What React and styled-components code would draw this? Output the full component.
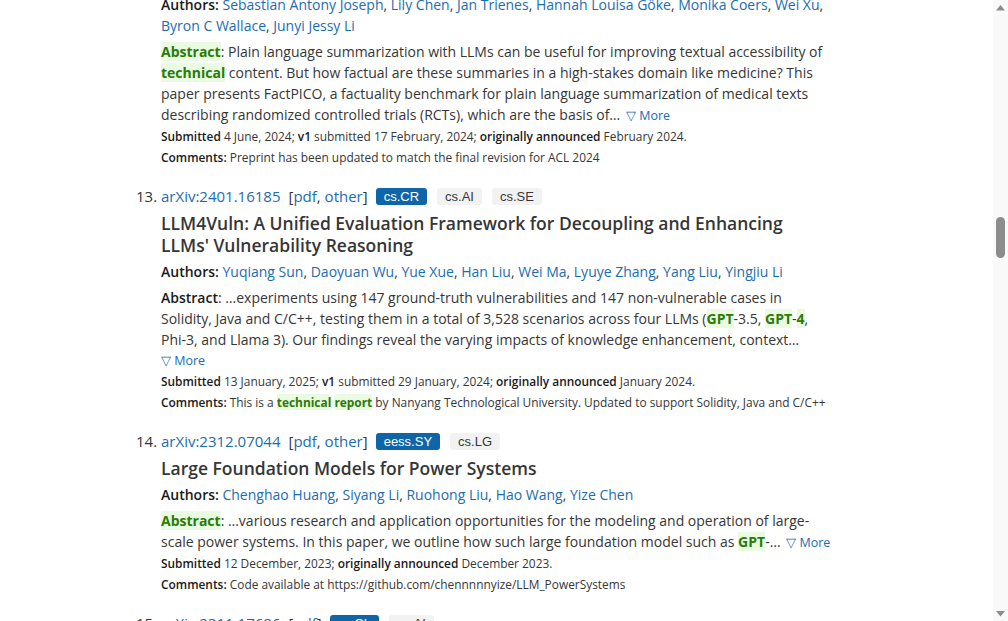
import React, { useLayoutEffect, useRef, useState } from 'react';
import styled, { createGlobalStyle } from 'styled-components';

const GlobalStyle = createGlobalStyle`
  body {
    margin: 0;
    background: #fff;
    color: #363636;
    font-family: "Open Sans", "Noto Sans", "Liberation Sans", sans-serif;
    overflow: hidden;
  }
`;

const ENTRIES = [
  {
    id: '2402.11456',
    formats: ['pdf', 'other'],
    primary: 'cs.CL',
    tags: [],
    title: 'FactPICO: Factuality Evaluation for Plain Language Summarization of Medical Evidence',
    authors: ['Sebastian Antony Joseph', 'Lily Chen', 'Jan Trienes', 'Hannah Louisa Göke', 'Monika Coers', 'Wei Xu', 'Byron C Wallace', 'Junyi Jessy Li'],
    abstractHit: true,
    abstract: [
      ': Plain language summarization with LLMs can be useful for improving textual accessibility of ',
      { hit: 'technical' },
      ' content. But how factual are these summaries in a high-stakes domain like medicine? This paper presents FactPICO, a factuality benchmark for plain language summarization of medical texts describing randomized controlled trials (RCTs), which are the basis of…',
    ],
    moreInline: true,
    submitted: '4 June, 2024',
    v1: '17 February, 2024',
    announced: 'February 2024.',
    comments: ['Preprint has been updated to match the final revision for ACL 2024'],
  },
  {
    id: '2401.16185',
    formats: ['pdf', 'other'],
    primary: 'cs.CR',
    tags: ['cs.AI', 'cs.SE'],
    title: "LLM4Vuln: A Unified Evaluation Framework for Decoupling and Enhancing LLMs' Vulnerability Reasoning",
    authors: ['Yuqiang Sun', 'Daoyuan Wu', 'Yue Xue', 'Han Liu', 'Wei Ma', 'Lyuye Zhang', 'Yang Liu', 'Yingjiu Li'],
    abstractHit: false,
    abstract: [
      ': …experiments using 147 ground-truth vulnerabilities and 147 non-vulnerable cases in Solidity, Java and C/C++, testing them in a total of 3,528 scenarios across four LLMs (',
      { hit: 'GPT' },
      '-3.5, ',
      { hit: 'GPT' },
      '-',
      { hit: '4' },
      ', Phi-3, and Llama 3). Our findings reveal the varying impacts of knowledge enhancement, context…',
    ],
    moreInline: false,
    submitted: '13 January, 2025',
    v1: '29 January, 2024',
    announced: 'January 2024.',
    comments: ['This is a ', { hit: 'technical' }, ' ', { hit: 'report' }, ' by Nanyang Technological University. Updated to support Solidity, Java and C/C++'],
  },
  {
    id: '2312.07044',
    formats: ['pdf', 'other'],
    primary: 'eess.SY',
    tags: ['cs.LG'],
    title: 'Large Foundation Models for Power Systems',
    authors: ['Chenghao Huang', 'Siyang Li', 'Ruohong Liu', 'Hao Wang', 'Yize Chen'],
    abstractHit: true,
    abstract: [
      ': …various research and application opportunities for the modeling and operation of large-scale power systems. In this paper, we outline how such large foundation model such as ',
      { hit: 'GPT' },
      '-…',
    ],
    moreInline: true,
    submitted: '12 December, 2023',
    v1: null,
    announced: 'December 2023.',
    comments: ['Code available at https://github.com/chennnnnyize/LLM_PowerSystems'],
  },
  {
    id: '2311.17686',
    formats: ['pdf'],
    primary: 'cs.CL',
    tags: ['cs.AI'],
    title: 'AviationGPT: A Large Language Model for the Aviation Domain',
    authors: ['Liya Wang', 'Jason Chou', 'Xin Zhou', 'Alex Tien', 'Diane M Baumgartner'],
    abstractHit: false,
    abstract: [
      ': The advent of ChatGPT and ',
      { hit: 'GPT' },
      '-',
      { hit: '4' },
      ' has captivated the world with large language models (LLMs), demonstrating exceptional performance in question-answering, summarization, and content generation. The aviation industry is…',
    ],
    moreInline: true,
    submitted: '29 November, 2023',
    v1: null,
    announced: 'November 2023.',
    comments: null,
  },
];

const RESULTS = Array.from({ length: 38 }, (_, i) => ENTRIES[(i + 1) % ENTRIES.length]);

const Frame = styled.div`
  display: flex;
  height: 100vh;
`;

const Viewport = styled.div`
  flex: 1;
  min-width: 0;
  overflow: hidden;
`;

const ScrollBar = styled.div`
  width: 15px;
  flex-shrink: 0;
  display: flex;
  flex-direction: column;
  background: #f9f9f9;
`;

const ArrowButton = styled.div`
  height: 15px;
  display: flex;
  align-items: center;
  justify-content: center;
  svg {
    display: block;
  }
`;

const Track = styled.div`
  flex: 1;
  display: flex;
  flex-direction: column;
  align-items: center;
`;

const Thumb = styled.div`
  width: 9px;
  border-radius: 5px;
  background: #8c8c8c;
`;

const Container = styled.main`
  max-width: 671px;
  margin: 0 auto;
  padding: 630px 0 40px;
`;

const ResultList = styled.ol`
  margin: 0;
  padding: 0;
  list-style: decimal outside;
`;

const Result = styled.li`
  margin-bottom: 16px;
  &::marker {
    font-size: 15px;
    color: #363636;
  }
`;

const ListTitle = styled.p`
  margin: 0 0 4px;
  font-size: 15px;
  line-height: 24px;
  display: flex;
  align-items: center;
  gap: 8px;
`;

const Link = styled.a`
  color: #1c6cb0;
  text-decoration: none;
`;

const Formats = styled.span`
  color: #363636;
`;

const Tag = styled.span`
  font-family: "Liberation Sans", Arial, sans-serif;
  font-size: 13px;
  line-height: 17px;
  padding: 0 8px;
  border-radius: 3px;
  margin-left: ${(p) => (p.$primary ? '0' : '2px')};
  background: ${(p) => (p.$primary ? '#0e66a9' : '#f2f2f2')};
  color: ${(p) => (p.$primary ? '#fff' : '#363636')};
`;

const Title = styled.p`
  margin: 0 0 5px;
  font-size: 17.5px;
  line-height: 22px;
  font-weight: 600;
  color: #363636;
`;

const Authors = styled.p`
  margin: 0 0 5px;
  font-size: 14px;
  line-height: 21px;
`;

const Label = styled.span`
  font-weight: 600;
  color: #1a1a1a;
`;

const Abstract = styled.p`
  margin: 0;
  font-size: 14px;
  line-height: 21px;
`;

const Hit = styled.span`
  background: #e9fbe1;
  color: #2b7a0b;
  font-weight: 700;
`;

const More = styled.a`
  color: #1c6cb0;
  font-size: 12.5px;
  text-decoration: none;
  white-space: nowrap;
  display: ${(p) => (p.$block ? 'block' : 'inline')};
  margin-left: ${(p) => (p.$block ? '0' : '2px')};
`;

const Meta = styled.p`
  margin: 0;
  font-size: 11.9px;
  line-height: 21px;
  color: #363636;
  b {
    font-weight: 600;
    color: #1a1a1a;
  }
`;

function Rich({ parts }) {
  return parts.map((p, i) => (typeof p === 'string' ? <React.Fragment key={i}>{p}</React.Fragment> : <Hit key={i}>{p.hit}</Hit>));
}

function Entry({ e, innerRef }) {
  return (
    <Result ref={innerRef}>
      <ListTitle>
        <Link href="#">arXiv:{e.id}</Link>
        <Formats>
          [
          {e.formats.map((f, i) => (
            <React.Fragment key={f}>
              {i > 0 && ', '}
              <Link href="#">{f}</Link>
            </React.Fragment>
          ))}
          ]
        </Formats>
        <Tag $primary>{e.primary}</Tag>
        {e.tags.map((t) => (
          <Tag key={t}>{t}</Tag>
        ))}
      </ListTitle>
      <Title>{e.title}</Title>
      <Authors>
        <Label>Authors:</Label>{' '}
        {e.authors.map((a, i) => (
          <React.Fragment key={a}>
            <Link href="#">{a}</Link>
            {i < e.authors.length - 1 && ', '}
          </React.Fragment>
        ))}
      </Authors>
      <Abstract>
        {e.abstractHit ? <Hit>Abstract</Hit> : <Label>Abstract</Label>}
        <Rich parts={e.abstract} />
        {e.moreInline ? (
          <>
            {' '}
            <More href="#">▽ More</More>
          </>
        ) : (
          <More href="#" $block>
            ▽ More
          </More>
        )}
      </Abstract>
      <Meta>
        <b>Submitted</b> {e.submitted};{' '}
        {e.v1 && (
          <>
            <b>v1</b> submitted {e.v1};{' '}
          </>
        )}
        <b>originally announced</b> {e.announced}
      </Meta>
      {e.comments && (
        <Meta>
          <b>Comments:</b> <Rich parts={e.comments} />
        </Meta>
      )}
    </Result>
  );
}

function Arrow({ down }) {
  return (
    <ArrowButton>
      <svg width="9" height="6" viewBox="0 0 9 6">
        <polygon points={down ? '0,0 9,0 4.5,5.5' : '0,5.5 9,5.5 4.5,0'} fill="#8c8c8c" />
      </svg>
    </ArrowButton>
  );
}

export default function App() {
  const viewport = useRef(null);
  const anchor = useRef(null);
  const track = useRef(null);
  const [thumb, setThumb] = useState({ top: 0, height: 40 });

  useLayoutEffect(() => {
    const vp = viewport.current;
    const el = anchor.current;
    if (!vp || !el) return;
    const offset = el.getBoundingClientRect().top - vp.getBoundingClientRect().top + vp.scrollTop;
    vp.scrollTop = offset - 184;
    const trackH = track.current.clientHeight;
    setThumb({
      top: (trackH * vp.scrollTop) / vp.scrollHeight,
      height: Math.max(20, (trackH * vp.clientHeight) / vp.scrollHeight),
    });
  }, []);

  return (
    <>
      <GlobalStyle />
      <Frame>
        <Viewport ref={viewport}>
          <Container>
            <ResultList>
              {RESULTS.map((e, i) => (
                <Entry key={i} e={e} innerRef={i === 12 ? anchor : null} />
              ))}
            </ResultList>
          </Container>
        </Viewport>
        <ScrollBar>
          <Arrow />
          <Track ref={track}>
            <Thumb style={{ marginTop: thumb.top, height: thumb.height }} />
          </Track>
          <Arrow down />
        </ScrollBar>
      </Frame>
    </>
  );
}
